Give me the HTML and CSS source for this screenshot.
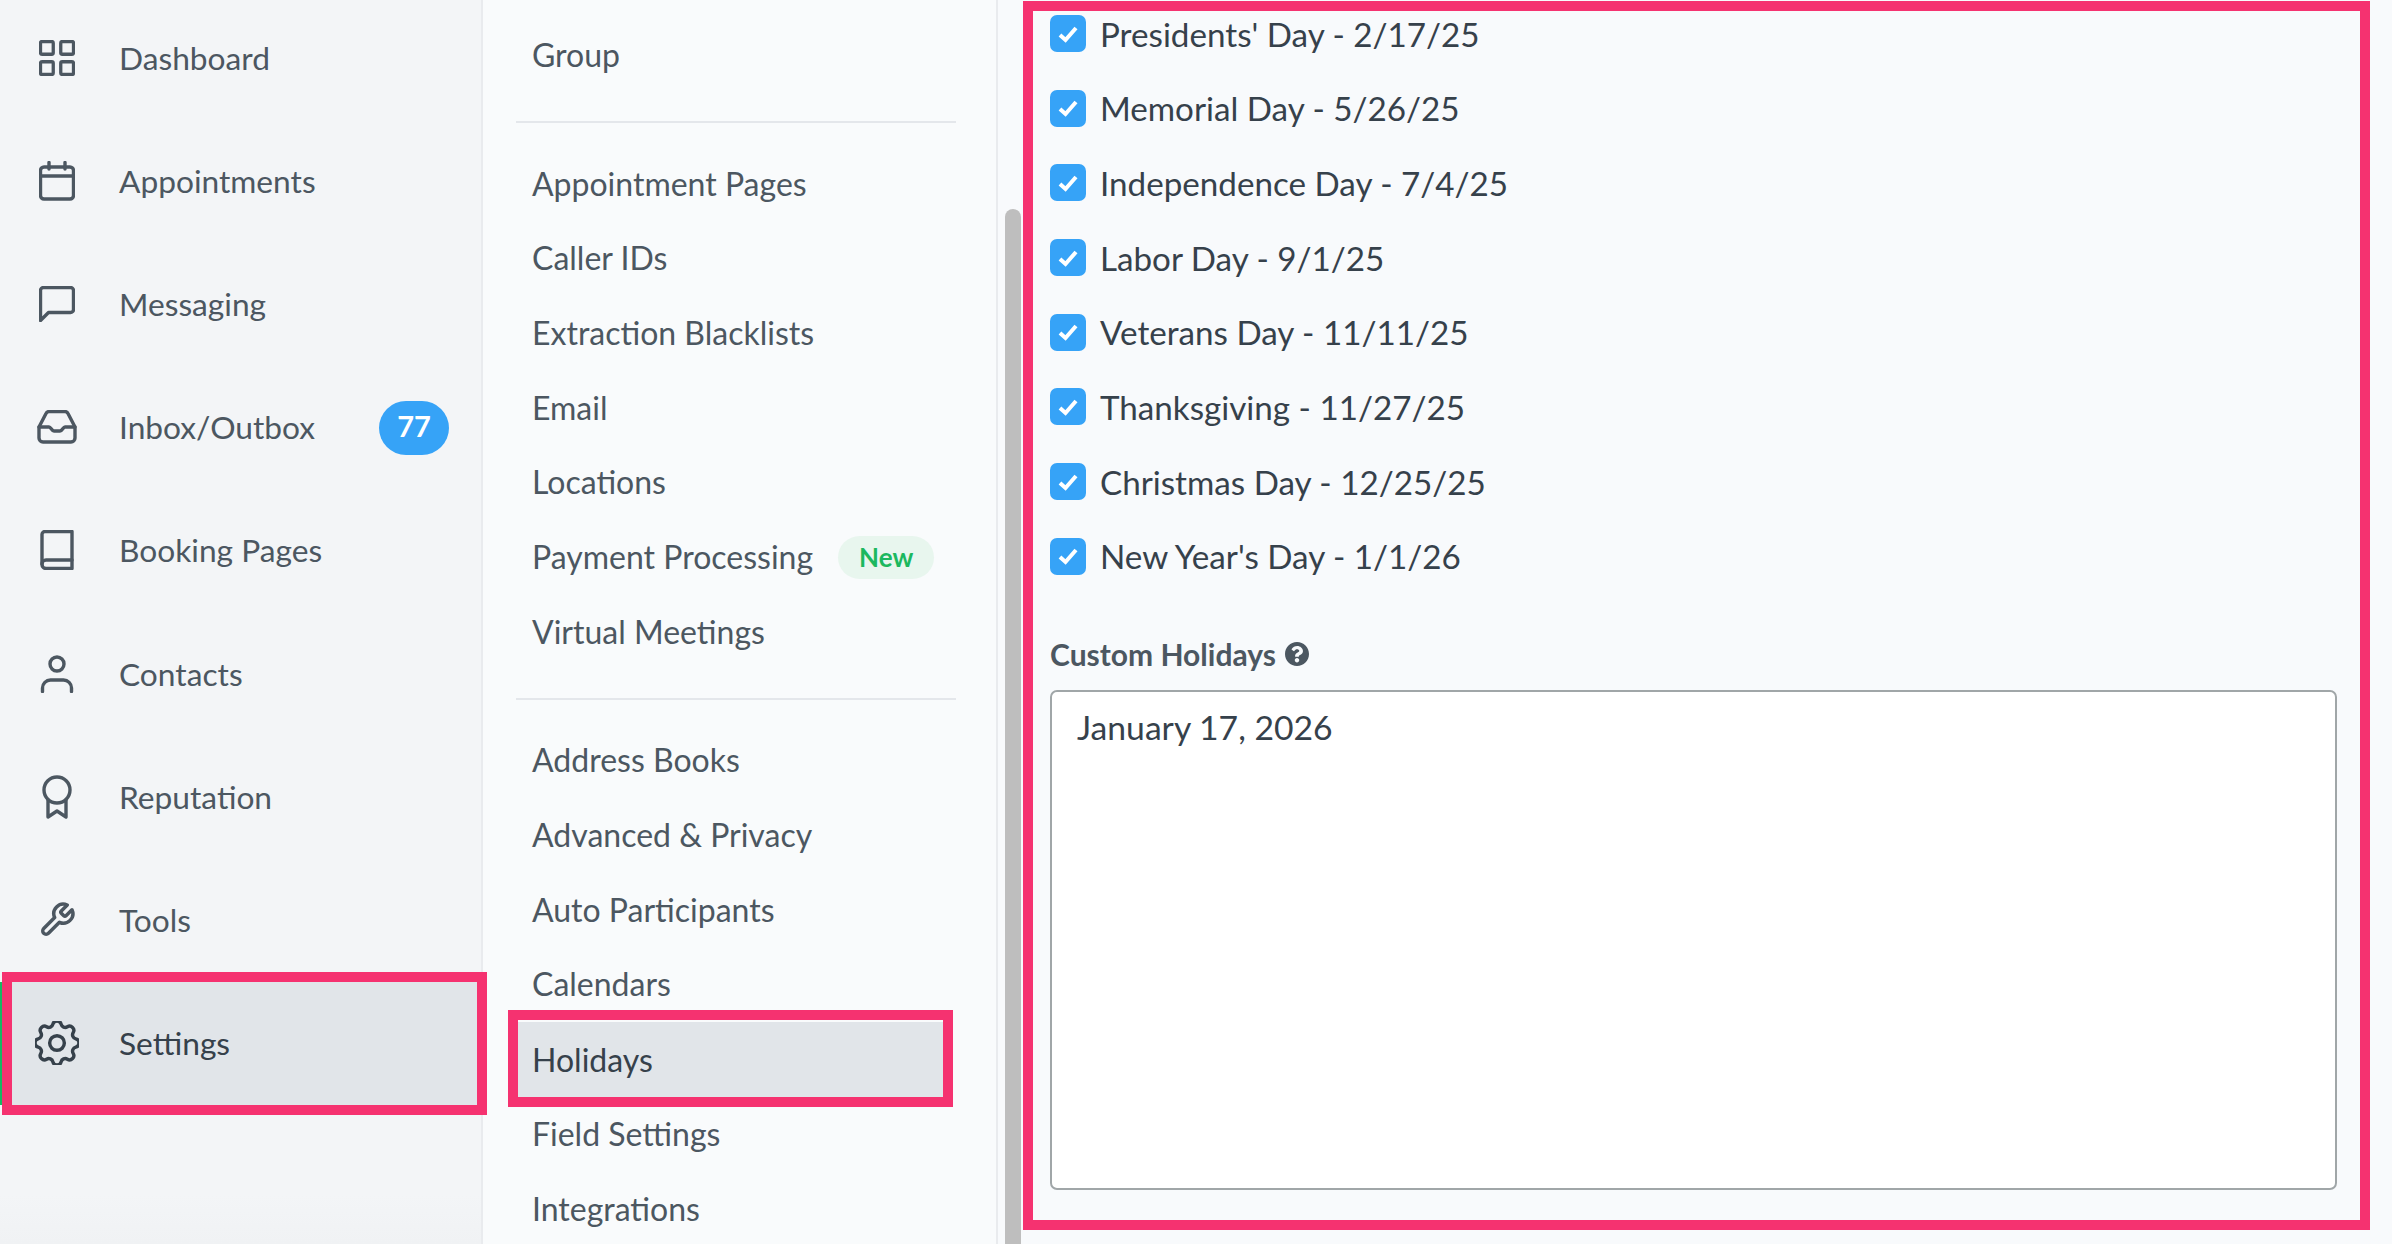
FILE: index.html
```html
<!DOCTYPE html>
<html lang="en">
<head>
    <meta charset="UTF-8">
    <title>Holidays - Settings</title>
    <link rel="stylesheet" href="styles.css">
</head>
<body>

<div class="app">

    <!-- Main navigation -->
    <nav class="sidebar">
        <a class="nav-item">
            <svg class="nav-icon" width="36" height="36" viewBox="0 0 24 24"><rect x="1" y="1" width="8.5" height="8.5" rx="1"/><rect x="14.5" y="1" width="8.5" height="8.5" rx="1"/><rect x="1" y="14.5" width="8.5" height="8.5" rx="1"/><rect x="14.5" y="14.5" width="8.5" height="8.5" rx="1"/></svg>
            <span>Dashboard</span>
        </a>
        <a class="nav-item">
            <svg class="nav-icon" width="36" height="40" viewBox="0 0 36 40"><rect x="1.5" y="6" width="33" height="32" rx="3.5"/><path d="M1.5 15h33M10 1.5V8M26 1.5V8"/></svg>
            <span>Appointments</span>
        </a>
        <a class="nav-item">
            <svg class="nav-icon" width="36" height="36" viewBox="0 0 36 36"><path d="M4.5 1.5h27a3 3 0 0 1 3 3v19a3 3 0 0 1-3 3H9.500l-8 8V4.500a3 3 0 0 1 3-3z"/></svg>
            <span>Messaging</span>
        </a>
        <a class="nav-item">
            <svg class="nav-icon" width="40" height="34" viewBox="0 0 40 34"><path d="M9 3.500 2 17v11a4 4 0 0 0 4 4h28a4 4 0 0 0 4-4V17L31 3.500a3.500 3.500 0 0 0-3-2H12a3.500 3.500 0 0 0-3 2z"/><path d="M2 17h10c2 0 2.500 4 5 4h6c2.500 0 3-4 5-4h10"/></svg>
            <span>Inbox/Outbox</span>
            <span class="count">77</span>
        </a>
        <a class="nav-item">
            <svg class="nav-icon" width="34" height="40" viewBox="0 0 34 40"><path d="M5 1.500h27v37H6a4 4 0 0 1-4-4v-30a3 3 0 0 1 3-3z"/><path d="M2 34a4 4 0 0 1 4-4h26"/></svg>
            <span>Booking Pages</span>
        </a>
        <a class="nav-item">
            <svg class="nav-icon" width="36" height="38" viewBox="0 0 36 38"><circle cx="18" cy="9" r="7"/><path d="M3.500 36.500V33a8 8 0 0 1 8-8h13a8 8 0 0 1 8 8v3.500"/></svg>
            <span>Contacts</span>
        </a>
        <a class="nav-item">
            <svg class="nav-icon" width="32" height="44" viewBox="0 0 32 44"><circle cx="16" cy="15" r="13"/><path d="M7 25v17l9-6 9 6V25"/></svg>
            <span>Reputation</span>
        </a>
        <a class="nav-item">
            <svg class="nav-icon" width="38" height="38" viewBox="0 0 24 24"><path d="M14.700 6.300a1 1 0 0 0 0 1.400l1.600 1.600a1 1 0 0 0 1.400 0l3.770-3.770a6 6 0 0 1-7.940 7.940l-6.910 6.910a2.120 2.120 0 0 1-3-3l6.910-6.910a6 6 0 0 1 7.940-7.940l-3.760 3.760z"/></svg>
            <span>Tools</span>
        </a>
        <a class="nav-item active marked">
            <svg class="nav-icon" width="44" height="44" viewBox="3 3 18 18"><path class="thin" d="M10.325 4.317c.426-1.756 2.924-1.756 3.350 0a1.724 1.724 0 0 0 2.573 1.066c1.543-.94 3.310.826 2.370 2.370a1.724 1.724 0 0 0 1.065 2.572c1.756.426 1.756 2.924 0 3.350a1.724 1.724 0 0 0-1.066 2.573c.94 1.543-.826 3.310-2.370 2.370a1.724 1.724 0 0 0-2.572 1.065c-.426 1.756-2.924 1.756-3.350 0a1.724 1.724 0 0 0-2.573-1.066c-1.543.94-3.310-.826-2.370-2.370a1.724 1.724 0 0 0-1.065-2.572c-1.756-.426-1.756-2.924 0-3.350a1.724 1.724 0 0 0 1.066-2.573c-.94-1.543.826-3.310 2.370-2.370.996.608 2.296.07 2.572-1.065z"/><circle class="thin" cx="12" cy="12" r="3"/></svg>
            <span>Settings</span>
        </a>
    </nav>

    <!-- Settings menu -->
    <nav class="submenu">
        <a class="sub-item">Group</a>
        <hr class="sub-divider">
        <a class="sub-item">Appointment Pages</a>
        <a class="sub-item">Caller IDs</a>
        <a class="sub-item">Extraction Blacklists</a>
        <a class="sub-item">Email</a>
        <a class="sub-item">Locations</a>
        <a class="sub-item">Payment Processing <span class="new-tag">New</span></a>
        <a class="sub-item">Virtual Meetings</a>
        <hr class="sub-divider">
        <a class="sub-item">Address Books</a>
        <a class="sub-item">Advanced &amp; Privacy</a>
        <a class="sub-item">Auto Participants</a>
        <a class="sub-item">Calendars</a>
        <a class="sub-item active marked">Holidays</a>
        <a class="sub-item">Field Settings</a>
        <a class="sub-item">Integrations</a>
    </nav>

    <div class="scroll-track"><div class="scroll-thumb"></div></div>

    <!-- Holidays form -->
    <main class="content">
        <div class="holiday-list">
            <label class="holiday"><span class="check"><svg width="22" height="18" viewBox="0 0 22 18"><path d="M3 10l5.500 5L19 3"/></svg></span>Presidents' Day - 2/17/25</label>
            <label class="holiday"><span class="check"><svg width="22" height="18" viewBox="0 0 22 18"><path d="M3 10l5.500 5L19 3"/></svg></span>Memorial Day - 5/26/25</label>
            <label class="holiday"><span class="check"><svg width="22" height="18" viewBox="0 0 22 18"><path d="M3 10l5.500 5L19 3"/></svg></span>Independence Day - 7/4/25</label>
            <label class="holiday"><span class="check"><svg width="22" height="18" viewBox="0 0 22 18"><path d="M3 10l5.500 5L19 3"/></svg></span>Labor Day - 9/1/25</label>
            <label class="holiday"><span class="check"><svg width="22" height="18" viewBox="0 0 22 18"><path d="M3 10l5.500 5L19 3"/></svg></span>Veterans Day - 11/11/25</label>
            <label class="holiday"><span class="check"><svg width="22" height="18" viewBox="0 0 22 18"><path d="M3 10l5.500 5L19 3"/></svg></span>Thanksgiving - 11/27/25</label>
            <label class="holiday"><span class="check"><svg width="22" height="18" viewBox="0 0 22 18"><path d="M3 10l5.500 5L19 3"/></svg></span>Christmas Day - 12/25/25</label>
            <label class="holiday"><span class="check"><svg width="22" height="18" viewBox="0 0 22 18"><path d="M3 10l5.500 5L19 3"/></svg></span>New Year's Day - 1/1/26</label>
        </div>

        <div class="field-label">
            Custom Holidays
            <svg class="help-icon" width="24" height="24" viewBox="8 8 496 496"><path d="M504 256c0 136.997-111.043 248-248 248S8 392.997 8 256C8 119.083 119.043 8 256 8s248 111.083 248 248zM262.655 90c-54.497 0-89.255 22.957-116.549 63.758-3.536 5.286-2.353 12.415 2.715 16.258l34.699 26.310c5.205 3.947 12.621 3.008 16.665-2.122 17.864-22.658 30.113-35.797 57.303-35.797 20.429 0 45.698 13.148 45.698 32.958 0 14.976-12.363 22.667-32.534 33.976C247.128 238.528 216 254.941 216 296v4c0 6.627 5.373 12 12 12h56c6.627 0 12-5.373 12-12v-1.333c0-28.462 83.186-29.647 83.186-106.667 0-58.002-60.165-102-116.531-102zM256 338c-25.365 0-46 20.635-46 46 0 25.364 20.635 46 46 46s46-20.636 46-46c0-25.365-20.635-46-46-46z"/></svg>
        </div>
        <textarea class="custom-holidays" readonly>January 17, 2026</textarea>
    </main>

</div>

</body>
</html>
```

FILE: styles.css
```css
* {
    box-sizing: border-box;
}
body {
    margin: 0;
    height: 1244px;
    overflow: hidden;
    font-family: "Lato", "Open Sans", sans-serif;
    font-size: 32px;
    color: #4c5761;
    background-color: #f8fafc;
}
.app {
    display: flex;
    height: 1244px;
}

/* Main navigation */
.sidebar {
    width: 483px;
    height: 1248px;
    margin-top: -4px;
    padding-right: 4px;
    flex-shrink: 0;
    font-size: 31.700px;
    background: linear-gradient(to bottom, #f3f5f7 96%, #f0f2f4 100%);
    border-right: 2px solid #e9ebee;
}
.nav-item {
    position: relative;
    display: flex;
    align-items: center;
    height: 123.200px;
    padding-left: 119px;
}
.nav-icon {
    position: absolute;
    left: 57px;
    top: 50%;
    transform: translate(-50%, -50%);
    fill: none;
    stroke: #4c5761;
    stroke-width: 3.400;
    stroke-linecap: round;
    stroke-linejoin: round;
}
.nav-icon[viewBox="0 0 24 24"] {
    stroke-width: 2.200;
}
.nav-icon .thin {
    stroke-width: 1.400;
}
.nav-item.active {
    background-color: #e1e5e9;
    border-left: 2px solid #16b862;
    padding-left: 117px;
    color: #36414b;
}
.nav-item.active .nav-icon {
    left: 55px;
    stroke: #36414b;
}
.count {
    position: absolute;
    left: 379px;
    top: 35px;
    width: 70px;
    height: 54px;
    border-radius: 27px;
    background-color: #36a3f7;
    color: #fff;
    font-weight: 700;
    font-size: 29px;
    text-align: center;
    line-height: 50px;
}

/* Annotation boxes drawn over the menus */
.marked::after {
    content: "";
    position: absolute;
    border: 10px solid #f53270;
}
.nav-item.marked::after {
    inset: -10px -10px -10px 0;
}
.sub-item.marked::after {
    inset: -12px -10px -10px -9px;
}

/* Settings menu */
.submenu {
    width: 515px;
    flex-shrink: 0;
    padding: 17px 40px 0 33px;
    background-color: #f9fbfc;
    border-right: 2px solid #e9ebee;
}
.sub-item {
    position: relative;
    display: flex;
    align-items: center;
    height: 74.700px;
    padding-left: 16px;
    white-space: nowrap;
}
.sub-item.active {
    height: 75px;
    margin: 1px 13px -1px 1px;
    padding-left: 15px;
    background-color: #e1e5e9;
    color: #36414b;
}
.sub-divider {
    height: 2px;
    margin: 29px 0 23px;
    border: none;
    background-color: #e4e7eb;
}
.new-tag {
    margin: 2px 0 0 25px;
    padding: 0 21px;
    height: 43px;
    line-height: 43px;
    border-radius: 22px;
    font-size: 26px;
    font-weight: 700;
    background-color: #e8f6ee;
    color: #1cb85f;
}

.scroll-track {
    width: 25px;
    flex-shrink: 0;
    padding: 209px 0 0 7px;
}
.scroll-thumb {
    width: 16px;
    height: 100%;
    border-radius: 8px 8px 0 0;
    background-color: #bebebe;
}

/* Holidays form */
.content {
    width: 1347px;
    height: 1229px;
    margin-top: 1px;
    padding: 4px 23px 0 17px;
    border: 10px solid #f53270;
    font-size: 33.200px;
    color: #36414b;
}
.holiday-list {
    display: flex;
    flex-direction: column;
    gap: 37.700px;
}
.holiday {
    display: flex;
    align-items: center;
    gap: 14px;
    height: 37px;
}
.check {
    display: flex;
    align-items: center;
    justify-content: center;
    width: 36px;
    height: 37px;
    border-radius: 7px;
    background-color: #36a3f7;
}
.check svg {
    fill: none;
    stroke: #fff;
    stroke-width: 4;
}
.field-label {
    display: flex;
    align-items: center;
    gap: 9px;
    height: 40px;
    margin: 59px 0 16px;
    font-size: 30px;
    font-weight: 700;
    color: #4c5761;
}
.help-icon {
    fill: #4c5761;
}
.custom-holidays {
    display: block;
    width: 100%;
    height: 500px;
    padding: 15px 25px;
    border: 2px solid #a0a6a8;
    border-radius: 7px;
    background-color: #fff;
    color: #36414b;
    font-family: inherit;
    font-size: 33.700px;
    resize: none;
    outline: none;
}
```
